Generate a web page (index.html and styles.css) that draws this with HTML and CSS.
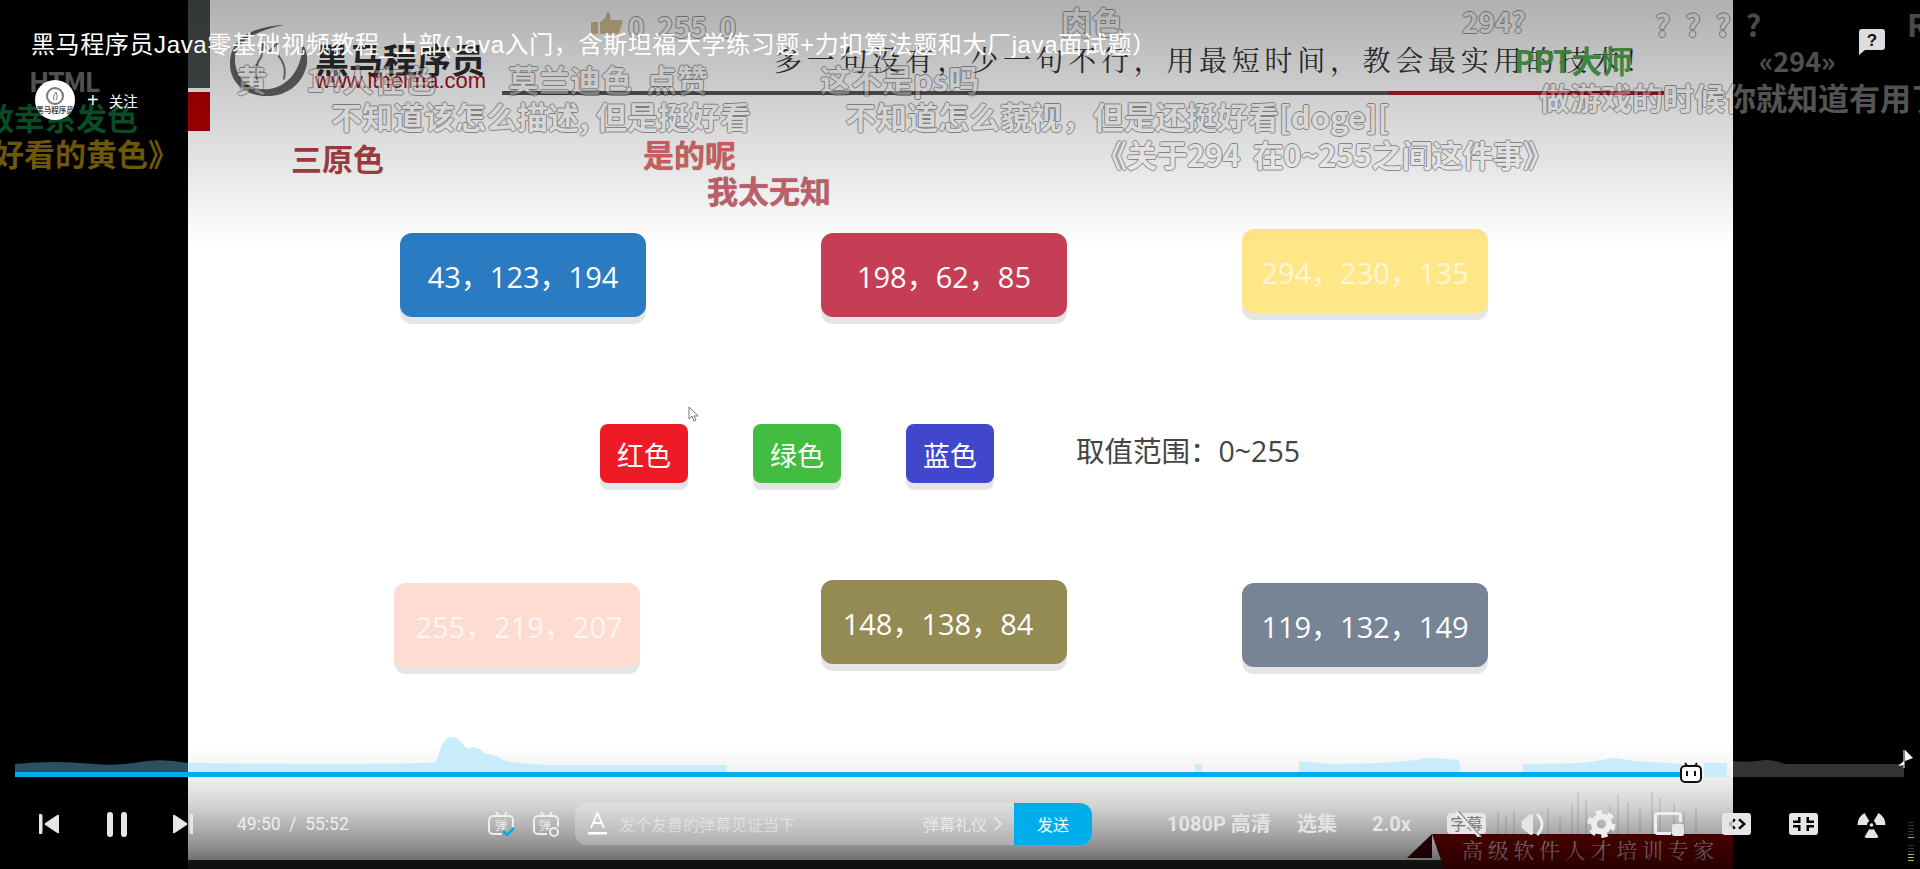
FILE: index.html
```html
<!doctype html>
<html lang="zh">

<head>
    <meta charset="utf-8">
    <title>黑马程序员Java零基础视频教程</title>
    <link rel="stylesheet" href="styles.css">
</head>

<body>
    <div class="player">
        <div class="video">
            <div class="side-bar side-dark"></div>
            <div class="side-bar side-red"></div>
            <svg class="logo-mark" viewBox="0 0 84 78">
                <path d="M58 3C30 4 3 14 2 41c-1 22 17 35 38 35 22 0 38-14 41-34 1-9-2-16-5-20 1 24-13 45-36 47C21 70 7 57 7 38 8 20 30 8 58 3Z" fill="#666"/>
                <path d="M30 60c-3-10-1-18 4-24l2-14 6 9 8-9 2 13c5 6 8 14 5 24" fill="none" stroke="#777" stroke-width="2"/>
            </svg>
            <div class="logo-name">黑马程序员</div>
            <div class="logo-url">www.itheima.com</div>
            <div class="motto">多一句没有，少一句不行，用最短时间，教会最实用的技术！</div>
            <div class="rule"></div>
            <div class="rule-red"></div>

            <div class="chip chip-blue">43，123，194</div>
            <div class="chip chip-crimson">198，62，85</div>
            <div class="chip chip-yellow">294，230，135</div>
            <div class="chip chip-small chip-red">红色</div>
            <div class="chip chip-small chip-green">绿色</div>
            <div class="chip chip-small chip-indigo">蓝色</div>
            <div class="range">取值范围：0~255</div>
            <svg class="cursor" viewBox="0 0 12 16"><path d="M1 1v12l3-3 2 5 2-1-2-4h4Z" fill="#fff" stroke="#777"/></svg>
            <div class="chip chip-pink">255，219，207</div>
            <div class="chip chip-olive">148，138，84</div>
            <div class="chip chip-slate">119，132，149</div>

            <svg class="skyline" viewBox="0 0 220 44">
                <path d="M10 22v22M18 26v18M26 20v24M40 26v18M52 24v20M60 18v26M72 28v16M84 14v30M90 2v42M98 10v34M110 22v22M122 16v28M130 4v40M140 12v32M152 20v24M164 2v42M172 8v36M186 14v30M196 22v22M208 18v26" stroke="#999" stroke-width="2" opacity=".22"/>
            </svg>
            <div class="video-foot"></div>
            <svg class="banner" viewBox="0 0 326 35">
                <path d="M0 24 25 0v24Z" fill="#3c0008"/>
                <path d="M25 0h301v35H37Z" fill="#6d0000"/>
            </svg>
            <div class="banner-text">高级软件人才培训专家</div>
        </div>

        <div class="dm dm-html">HTML</div>
        <div class="dm dm-huang">黄</div>
        <div class="dm dm-online">14人在色</div>
        <div class="dm dm-morandi">莫兰迪色&nbsp;&nbsp;点赞</div>
        <div class="dm dm-ps">这不是ps吗</div>
        <div class="dm dm-desc">不知道该怎么描述, 但是挺好看</div>
        <div class="dm dm-doge">不知道怎么藐视，但是还挺好看[doge][</div>
        <div class="dm dm-rgb">0&nbsp;&nbsp;255&nbsp;&nbsp;0</div>
        <svg class="dm-thumb" viewBox="0 0 32 22"><path d="M0 10h7v12H0ZM9 10l5-4 2-6c3 0 4 3 3 8h11c2 0 2 3 1 4l-3 9c-1 1-2 1-3 1H9Z" fill="#c9a868"/></svg>
        <div class="dm dm-flesh">肉色</div>
        <div class="dm dm-294q">294?</div>
        <div class="dm dm-qqq">? ? ? ?</div>
        <div class="dm dm-294">«294»</div>
        <div class="dm dm-game">做游戏的时候你就知道有用了</div>
        <div class="dm dm-about">《关于294&nbsp;&nbsp;在0~255之间这件事》</div>
        <div class="dm dm-r">R</div>
        <div class="dm dm-primary">三原色</div>
        <div class="dm dm-yes">是的呢</div>
        <div class="dm dm-naive">我太无知</div>
        <div class="dm dm-ppt">PPT大师</div>
        <div class="dm dm-hair">敦幸系发色</div>
        <div class="dm dm-yellow">《好看的黄色》</div>

        <div class="shade-top"></div>
        <div class="shade-bottom"></div>

        <div class="title">黑马程序员Java零基础视频教程_上部(Java入门，含斯坦福大学练习题+力扣算法题和大厂java面试题）</div>
        <div class="follow">
            <div class="avatar">
                <svg viewBox="0 0 20 20"><circle cx="10" cy="10" r="8" fill="none" stroke="#777" stroke-width="2"/><path d="M9 14c-1-3 0-5 2-8 1 3 2 5 0 8" fill="none" stroke="#777"/></svg>
                <span>黑马程序员</span>
            </div>
            <span class="follow-plus">+</span>
            <span class="follow-text">关注</span>
        </div>
        <svg class="report" viewBox="0 0 26 26">
            <path d="M3 0h20a3 3 0 0 1 3 3v15a3 3 0 0 1-3 3H6l-6 5V3a3 3 0 0 1 3-3Z" fill="#ddd"/>
            <text x="13" y="17" text-anchor="middle" class="report-mark">?</text>
        </svg>

        <svg class="progress" viewBox="0 735 1920 48">
            <path d="M15 777V764Q35 762 53 762T95 764 140 762 188 763V777Z" fill="#2a5161"/>
            <path d="M188 777V763L340 764 432 763Q437 763 440 750 444 737 452 737 458 737 463 744 467 750 472 747 478 747 483 752 488 755 493 755 498 756 503 760 507 762 520 763L545 765H727V777Z" fill="#c9ecfa"/>
            <path d="M1195 764h7v13h-7ZM1299 761 1331 764 1382 763 1417 760Q1425 757 1432 758L1457 760 1460 763V777H1299ZM1523 764 1583 763 1614 758 1634 761 1682 764V777H1523ZM1704 763h23v14h-23Z" fill="#c9ecfa"/>
            <path d="M740 764h1v8h-1ZM770 764h1v8h-1ZM805 764h1v8h-1ZM887 764h1v8h-1ZM1010 764h1v8h-1ZM1040 764h1v8h-1ZM1213 764h1v8h-1ZM1245 764h1v8h-1ZM1467 764h1v8h-1ZM1475 764h1v8h-1ZM1493 764h1v8h-1Z" fill="#dff3fb"/>
            <path d="M1733 777V761Q1750 763 1765 760 1775 760 1785 764H1904V777Z" fill="#333"/>
            <rect x="15" y="772" width="1674" height="5" fill="#00aeec"/>
            <path d="M1685 763l3 4M1697 763l-3 4" stroke="#111" stroke-width="2"/>
            <rect x="1681" y="766" width="20" height="16" rx="4" fill="#fff" stroke="#111" stroke-width="2"/>
            <path d="M1687 771v5M1695 771v5" stroke="#111" stroke-width="2"/>
            <path d="M1904 750v18" stroke="#fff"/>
            <path d="M1905 750l8 8-8 3ZM1904 761l-6 5 6-1Z" fill="#fff"/>
        </svg>

        <div class="bar">
            <svg class="ctl ctl-prev" viewBox="0 0 20 20"><rect width="3" height="20" rx="1.5"/><path d="M19 2 7 10l12 8Z" stroke-width="2.5" stroke-linejoin="round"/></svg>
            <svg class="ctl ctl-pause" viewBox="0 0 20 25"><rect width="6" height="25" rx="3"/><rect x="14" width="6" height="25" rx="3"/></svg>
            <svg class="ctl ctl-next" viewBox="0 0 20 20"><rect x="17" width="3" height="20" rx="1.5"/><path d="M1 2l12 8-12 8Z" stroke-width="2.5" stroke-linejoin="round"/></svg>
            <div class="time">49:50&nbsp;&nbsp;/&nbsp;&nbsp;55:52</div>
            <svg class="dm-toggle" viewBox="0 0 27 27">
                <path d="M8 1l3 4M19 1l-3 4" class="ln"/>
                <path d="M14 23H5a4 4 0 0 1-4-4V9a4 4 0 0 1 4-4h16a4 4 0 0 1 4 4v7" class="ln"/>
                <text x="13" y="19" text-anchor="middle" class="dm-glyph">弹</text>
                <path d="M15 20l4 4 7-7" fill="none" stroke="#00aeec" stroke-width="2.5"/>
            </svg>
            <svg class="dm-setting" viewBox="0 0 27 27">
                <path d="M8 1l3 4M19 1l-3 4" class="ln"/>
                <path d="M14 23H5a4 4 0 0 1-4-4V9a4 4 0 0 1 4-4h16a4 4 0 0 1 4 4v7" class="ln"/>
                <text x="12" y="19" text-anchor="middle" class="dm-glyph">弹</text>
                <circle cx="21" cy="21" r="4" fill="none" stroke="#eee" stroke-width="2"/>
            </svg>
            <div class="send-box">
                <svg class="font-a" viewBox="0 0 19 24">
                    <path d="M3 16 9.5 1 16 16M5.5 11h8" fill="none" stroke="#fff" stroke-width="1.8"/>
                    <rect y="20" width="19" height="2.5" fill="#fff"/>
                </svg>
                <span class="placeholder">发个友善的弹幕见证当下</span>
                <span class="etiquette">弹幕礼仪</span>
                <svg class="chev" viewBox="0 0 8 14"><path d="M1 1l6 6-6 6" fill="none" stroke="#eee" stroke-width="1.4"/></svg>
                <div class="send">发送</div>
            </div>
            <div class="lbl lbl-quality">1080P 高清</div>
            <div class="lbl lbl-episodes">选集</div>
            <div class="lbl lbl-speed">2.0x</div>
            <svg class="ctl ctl-sub" viewBox="0 0 39 26">
                <rect y="2" width="39" height="21" rx="4"/>
                <text x="19.5" y="19" text-anchor="middle" class="sub-glyph">字幕</text>
                <path d="M11 0 34 26" stroke="#9a9a9a" stroke-width="2"/>
                <path d="M9 0 32 26" stroke="#eee" stroke-width="2"/>
            </svg>
            <svg class="ctl ctl-volume" viewBox="0 0 26 23">
                <path d="M.5 9Q.5 7.500 2 7L8 2Q12-.5 12 3V20Q12 23.500 8 21L2 16Q.5 15 .5 14Z"/>
                <path d="M17 2Q25 11.500 17 21" fill="none" stroke="#eee" stroke-width="3" stroke-linecap="round"/>
            </svg>
            <svg class="ctl ctl-gear" viewBox="0 0 29 28">
                <circle cx="14.500" cy="14" r="7.500" fill="none" stroke="#eee" stroke-width="6"/>
                <circle cx="14.500" cy="14" r="12" fill="none" stroke="#eee" stroke-width="4" stroke-dasharray="6.300 6.270"/>
            </svg>
            <svg class="ctl ctl-pip" viewBox="0 0 30 24">
                <path d="M17 21.500H4Q1.500 21.500 1.500 19V4Q1.500 1.500 4 1.500H24Q26.500 1.500 26.500 4V10" fill="none" stroke="#eee" stroke-width="3"/>
                <rect x="18" y="12" width="12" height="12" rx="2"/>
            </svg>
            <svg class="ctl ctl-wide" viewBox="0 0 29 22">
                <path fill-rule="evenodd" d="M3 0H26a3 3 0 0 1 3 3V19a3 3 0 0 1-3 3H3a3 3 0 0 1-3-3V3A3 3 0 0 1 3 0ZM12 5.500 6 11 12 16.500 13.800 14.700 9.500 11 13.800 7.300ZM18 5.500 16.200 7.300 20.500 11 16.200 14.700 18 16.500 24 11Z"/>
            </svg>
            <svg class="ctl ctl-full" viewBox="0 0 29 22">
                <path fill-rule="evenodd" d="M3 0H26a3 3 0 0 1 3 3V19a3 3 0 0 1-3 3H3a3 3 0 0 1-3-3V3A3 3 0 0 1 3 0ZM9 4V7.500H4V10H11.500V4ZM17.500 4V10H25V7.500H20V4ZM4 12V14.500H9V18H11.500V12ZM17.500 12V18H20V14.500H25V12Z"/>
            </svg>
            <svg class="ctl ctl-rad" viewBox="0 0 29 28">
                <path d="M21.500 27.100A14 14 0 0 1 7.500 27.100L12.250 18.900A4.500 4.500 0 0 0 16.750 18.900ZM21.500 2.900A14 14 0 0 1 28.500 15H19A4.500 4.500 0 0 0 16.750 11.100ZM.5 15A14 14 0 0 1 7.500 2.900L12.250 11.100A4.500 4.500 0 0 0 10 15Z"/>
                <circle cx="14.500" cy="15" r="1.800"/>
            </svg>
        </div>

        <svg class="meter" viewBox="0 0 6 40">
            <path d="M0 .5h6M0 3.500h6M0 6.500h6M0 9.500h6M0 12.500h6M0 23.500h6M0 26.500h6M0 29.500h6" stroke="#333"/>
            <path d="M0 15.500h6" stroke="#f0901e"/>
            <path d="M0 32.500h6M0 35.500h6M0 38.500h6" stroke="#9ccc3c"/>
        </svg>
    </div>
</body>

</html>
```
FILE: styles.css
```css
body {
    margin: 0;
    background: #000;
    overflow: hidden;
    font-family: "Liberation Sans", "Noto Sans CJK SC", sans-serif;
}

.player {
    position: relative;
    width: 1920px;
    height: 869px;
    overflow: hidden;
    background: #000;
}

/* the video frame, everything in it sits on the picture */
.video {
    position: absolute;
    left: 188px;
    top: 0;
    width: 1545px;
    height: 869px;
    background: #fff;
    overflow: hidden;
}

.side-bar {
    position: absolute;
    left: 0;
    width: 22px;
}

.side-dark {
    top: 0;
    height: 88px;
    background: #4a4e4f;
}

.side-red {
    top: 92px;
    height: 39px;
    background: #b00000;
}

.logo-mark {
    position: absolute;
    left: 39px;
    top: 22px;
    width: 84px;
    height: 76px;
}

.logo-name {
    position: absolute;
    left: 127px;
    top: 39px;
    font: bold 34px/40px "Noto Sans CJK SC", sans-serif;
    color: #2c2c2c;
}

.logo-url {
    position: absolute;
    left: 127px;
    top: 67px;
    font-size: 22px;
    line-height: 27px;
    color: #a8101c;
}

.motto {
    position: absolute;
    left: 586px;
    top: 39px;
    font: 28px/40px "Noto Serif CJK SC", "Noto Sans CJK SC", sans-serif;
    letter-spacing: 4.7px;
    color: #333;
    white-space: nowrap;
}

.rule {
    position: absolute;
    left: 314px;
    top: 91px;
    width: 887px;
    height: 4px;
    background: #555;
}

.rule-red {
    position: absolute;
    left: 1201px;
    top: 91px;
    width: 275px;
    height: 4px;
    background: #a81c28;
}

.chip {
    position: absolute;
    width: 246px;
    height: 84px;
    padding-top: 2px;
    box-sizing: border-box;
    border-radius: 12px;
    display: flex;
    align-items: center;
    justify-content: center;
    color: #fff;
    font: 29px/1 "Open Sans", "Noto Sans CJK SC", sans-serif;
    white-space: nowrap;
    box-shadow: 0 7px 0 #e4e6e6;
}

.chip-small {
    width: 88px;
    height: 59px;
    font-family: "Noto Sans CJK SC", sans-serif;
    font-size: 27px;
    border-radius: 8px;
}

.chip-blue { left: 212px; top: 233px; background: #2b7bc2; }
.chip-crimson { left: 633px; top: 233px; background: #c63e55; }
.chip-yellow { left: 1054px; top: 229px; background: #ffe687; color: #fff6d8; }
.chip-red { left: 412px; top: 424px; background: #ee1a26; }
.chip-green { left: 565px; top: 424px; background: #42bd41; }
.chip-indigo { left: 718px; top: 424px; background: #4147cc; }
.chip-pink { left: 206px; top: 583px; padding-left: 4px; background: #ffdcd2; color: #fff6f2; }
.chip-olive { left: 633px; top: 580px; padding-right: 12px; background: #938a54; }
.chip-slate { left: 1054px; top: 583px; background: #778495; }

.range {
    position: absolute;
    left: 888px;
    top: 432px;
    font: 28.5px/38px "Open Sans", "Noto Sans CJK SC", sans-serif;
    color: #444;
    white-space: nowrap;
}

.cursor {
    position: absolute;
    left: 500px;
    top: 406px;
    width: 12px;
    height: 16px;
}

.skyline {
    position: absolute;
    left: 1300px;
    top: 790px;
    width: 220px;
    height: 44px;
}

.video-foot {
    position: absolute;
    left: 0;
    right: 0;
    bottom: 0;
    height: 9px;
    background: #2c2d2d;
}

.banner {
    position: absolute;
    left: 1219px;
    top: 834px;
    width: 326px;
    height: 35px;
}

.banner-text {
    position: absolute;
    left: 1274px;
    top: 836px;
    font: 21px/26px "Noto Serif CJK SC", "Noto Sans CJK SC", sans-serif;
    letter-spacing: 4.7px;
    color: #c4a8a8;
    white-space: nowrap;
}

/* bullet comments */
.dm {
    position: absolute;
    font: bold 31px/36px "Noto Sans CJK SC", sans-serif;
    color: #fff;
    opacity: .4;
    white-space: nowrap;
    text-shadow: 1px 0 0 #000, -1px 0 0 #000, 0 1px 0 #000, 0 -1px 0 #000;
}

.dm-html { left: 29px; top: 63px; font-size: 27px; letter-spacing: -1.5px; }
.dm-huang { left: 236px; top: 61px; }
.dm-online { left: 306px; top: 61px; }
.dm-morandi { left: 508px; top: 61px; }
.dm-ps { left: 820px; top: 61px; }
.dm-desc { left: 331px; top: 98px; }
.dm-doge { left: 845px; top: 98px; }
.dm-rgb { left: 628px; top: 8px; font-size: 28px; }
.dm-flesh { left: 1061px; top: 3px; }
.dm-294q { left: 1462px; top: 3px; font-size: 28px; }
.dm-qqq { left: 1655px; top: 6px; font-size: 30px; word-spacing: 8px; }
.dm-294 { left: 1759px; top: 43px; font-size: 27px; }
.dm-game { left: 1539px; top: 79px; }
.dm-about { left: 1096px; top: 136px; letter-spacing: -.65px; }
.dm-r { left: 1907px; top: 6px; }

.dm-primary { left: 291px; top: 140px; color: #a42c30; opacity: .9; text-shadow: none; }
.dm-yes { left: 643px; top: 136px; color: #e25f62; opacity: .95; text-shadow: 0 0 1px #777; }
.dm-naive { left: 707px; top: 172px; color: #c95c68; opacity: .95; text-shadow: 0 0 1px #777; }
.dm-ppt { left: 1514px; top: 42px; letter-spacing: -1px; color: #49a84c; opacity: .95; text-shadow: none; }
.dm-hair { left: -17px; top: 99px; color: #0a5a2c; opacity: 1; text-shadow: none; }
.dm-yellow { left: -38px; top: 135px; color: #7c6208; opacity: 1; text-shadow: none; }

.dm-thumb {
    position: absolute;
    left: 591px;
    top: 12px;
    width: 32px;
    height: 22px;
    opacity: .7;
}

.shade-top {
    position: absolute;
    left: 0;
    right: 0;
    top: 0;
    height: 245px;
    background: linear-gradient(rgba(0, 0, 0, .31), rgba(0, 0, 0, 0));
}

.shade-bottom {
    position: absolute;
    left: 0;
    right: 0;
    top: 745px;
    bottom: 0;
    background: linear-gradient(rgba(0, 0, 0, 0), rgba(0, 0, 0, .06) 25%, rgba(0, 0, 0, .18) 50%, rgba(0, 0, 0, .42) 80%, rgba(0, 0, 0, .65) 100%);
}

.title {
    position: absolute;
    left: 31px;
    top: 29px;
    font-size: 24px;
    line-height: 32px;
    letter-spacing: .62px;
    color: #fff;
    white-space: nowrap;
}

.follow {
    position: absolute;
    left: 35px;
    top: 80px;
    display: flex;
    align-items: center;
    color: #fff;
    font-size: 14.5px;
}

.avatar {
    position: relative;
    width: 40px;
    height: 40px;
    border-radius: 50%;
    background: #fff;
    display: flex;
    flex-direction: column;
    align-items: center;
    overflow: hidden;
}

.avatar svg {
    width: 20px;
    height: 20px;
    margin-top: 6px;
}

.avatar span {
    font-size: 7.500px;
    line-height: 9px;
    font-weight: bold;
    color: #444;
    white-space: nowrap;
}

.follow-plus {
    margin-left: 12px;
    font-size: 20px;
    font-weight: 300;
}

.follow-text {
    margin-left: 10px;
}

.report {
    position: absolute;
    left: 1859px;
    top: 29px;
    width: 26px;
    height: 26px;
}

.report-mark {
    font: bold 17px "Liberation Sans", sans-serif;
    fill: #111;
}

.progress {
    position: absolute;
    left: 0;
    top: 735px;
    width: 1920px;
    height: 48px;
}

/* controls row */
.bar {
    position: absolute;
    left: 0;
    right: 0;
    top: 803px;
    height: 42px;
    padding-left: 39px;
    display: flex;
    align-items: center;
    color: #e6e6e6;
}

.ctl {
    fill: #e6e6e6;
    stroke: none;
    flex: none;
}

.ctl-prev, .ctl-next {
    width: 20px;
    height: 20px;
    stroke: #e6e6e6;
}

.ctl-pause {
    width: 20px;
    height: 25px;
    margin-left: 48px;
}

.ctl-next {
    margin-left: 46px;
}

.time {
    width: 112px;
    margin-left: 44px;
    font: 17.5px/20px Roboto, sans-serif;
    white-space: nowrap;
    color: #eee;
}

.dm-toggle, .dm-setting {
    width: 27px;
    height: 27px;
    flex: none;
}

.dm-toggle {
    margin-left: 139px;
}

.dm-setting {
    margin-left: 18px;
}

.ln {
    fill: none;
    stroke: #eee;
    stroke-width: 2;
}

.dm-glyph {
    font: 12px "Noto Sans CJK SC", sans-serif;
    fill: #eee;
}

.send-box {
    width: 517px;
    height: 42px;
    margin-left: 15px;
    flex: none;
    display: flex;
    align-items: center;
    border-radius: 12px;
    background: rgba(255, 255, 255, .25);
    overflow: hidden;
}

.font-a {
    width: 19px;
    height: 24px;
    margin-left: 13px;
    flex: none;
}

.placeholder {
    margin-left: 12px;
    width: 304px;
    font: 16px/20px "Noto Sans CJK SC", sans-serif;
    color: rgba(255, 255, 255, .45);
    white-space: nowrap;
}

.etiquette {
    font: 16px/20px "Noto Sans CJK SC", sans-serif;
    color: rgba(255, 255, 255, .6);
    white-space: nowrap;
}

.chev {
    width: 8px;
    height: 14px;
    margin-left: 7px;
}

.send {
    width: 78px;
    height: 42px;
    margin-left: auto;
    background: #00aeec;
    color: #fff;
    font: 16px/42px "Noto Sans CJK SC", sans-serif;
    text-align: center;
}

.lbl {
    flex: none;
    font: bold 20px/26px Roboto, "Noto Sans CJK SC", sans-serif;
    color: #e4e4e4;
    white-space: nowrap;
}

.lbl-quality { width: 102px; margin-left: 75px; }
.lbl-episodes { width: 40px; margin-left: 28px; }
.lbl-speed { width: 40px; margin-left: 35px; }

.ctl-sub {
    width: 39px;
    height: 26px;
    margin-left: 35px;
}

.sub-glyph {
    font: 16px "Noto Sans CJK SC", sans-serif;
    fill: #777;
}

.ctl-volume { width: 26px; height: 23px; margin-left: 35px; }
.ctl-gear { width: 29px; height: 28px; margin-left: 40px; }
.ctl-pip { width: 30px; height: 24px; margin-left: 38px; }
.ctl-wide { width: 29px; height: 22px; margin-left: 38px; }
.ctl-full { width: 29px; height: 22px; margin-left: 38px; }
.ctl-rad { width: 29px; height: 28px; margin-left: 39px; }

.meter {
    position: absolute;
    left: 1908px;
    top: 822px;
    width: 6px;
    height: 40px;
}
```
